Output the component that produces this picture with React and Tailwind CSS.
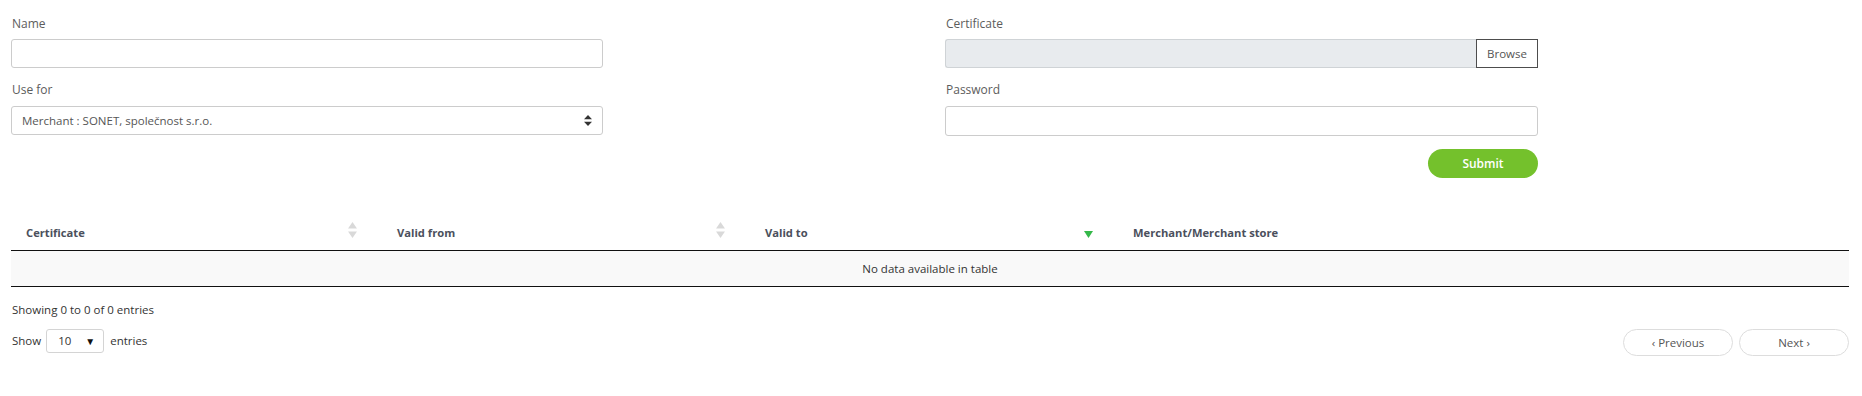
import React from "react";

function SortBoth() {
  return (
    <svg width="9" height="16" viewBox="0 0 9 16" className="block">
      <path d="M4.5 0 L9 6.5 L0 6.5 Z" fill="#d9d9d9" />
      <path d="M0 9.5 L9 9.5 L4.5 16 Z" fill="#d9d9d9" />
    </svg>
  );
}

function SortDesc() {
  return (
    <svg width="9" height="7" viewBox="0 0 9 7" className="block">
      <path d="M0 0 L9 0 L4.5 7 Z" fill="#35b84a" />
    </svg>
  );
}

function HeaderCell({ label, icon, width }) {
  return (
    <div className={`relative flex items-center pl-[15px] pt-[2px] ${width}`}>
      <span className="font-bold text-[#4b505c] text-[11.2px]">{label}</span>
      {icon === "both" && (
        <span className="absolute right-[25px] top-[8px]">
          <SortBoth />
        </span>
      )}
      {icon === "desc" && (
        <span className="absolute right-[25px] top-[17px]">
          <SortDesc />
        </span>
      )}
    </div>
  );
}

export default function App() {
  return (
    <div className="w-[1862px] h-[396px] bg-white font-['Open_Sans',sans-serif] text-[12px] text-[#333] overflow-hidden">
      <div className="pl-[11px] pr-[13px] pt-[16px]">
        <div className="grid grid-cols-[592px_593px] gap-x-[342px]">
          <div className="flex flex-col">
            <label className="h-[16px] leading-[16px] text-[#5c5c5c] pl-[1px]">Name</label>
            <input className="mt-[7px] h-[29px] border border-[#cccccc] rounded-[3px] bg-white outline-none px-[10px]" />
            <label className="mt-[14px] h-[16px] leading-[16px] text-[#5c5c5c] pl-[1px]">Use for</label>
            <div className="mt-[8px] h-[29px] border border-[#cccccc] rounded-[3px] bg-white flex items-center justify-between pl-[10px] pr-[10px]">
              <span className="text-[#555] text-[11.5px]">Merchant : SONET, společnost s.r.o.</span>
              <svg width="8" height="11" viewBox="0 0 8 11" className="block">
                <path d="M4 0 L8 4.3 L0 4.3 Z" fill="#333" />
                <path d="M0 6.7 L8 6.7 L4 11 Z" fill="#333" />
              </svg>
            </div>
          </div>
          <div className="flex flex-col">
            <label className="h-[16px] leading-[16px] text-[#5c5c5c] pl-[1px]">Certificate</label>
            <div className="mt-[7px] h-[29px] flex">
              <div className="flex-1 bg-[#e8ebee] border border-[#cfd3d6] border-r-0 rounded-l-[3px]" />
              <div className="w-[62px] border border-[#4d4d4d] bg-white flex items-center justify-center text-[#555] text-[11.5px]">
                Browse
              </div>
            </div>
            <label className="mt-[14px] h-[16px] leading-[16px] text-[#5c5c5c] pl-[1px]">Password</label>
            <input
              type="password"
              className="mt-[8px] h-[30px] border border-[#cccccc] rounded-[3px] bg-white outline-none px-[10px]"
            />
            <div className="mt-[13px] flex justify-end">
              <button className="w-[110px] h-[29px] rounded-full bg-[#74c12c] text-white font-semibold text-[12px]">
                Submit
              </button>
            </div>
          </div>
        </div>

        <div className="mt-[36px] w-[1838px]">
          <div className="flex h-[37px] border-b border-[#111]">
            <HeaderCell label="Certificate" icon="both" width="w-[371px]" />
            <HeaderCell label="Valid from" icon="both" width="w-[368px]" />
            <HeaderCell label="Valid to" icon="desc" width="w-[368px]" />
            <HeaderCell label="Merchant/Merchant store" width="flex-1" />
          </div>
          <div className="h-[36px] bg-[#f9f9f9] border-b border-[#111] flex items-center justify-center text-[#333] text-[11.5px]">
            No data available in table
          </div>
        </div>

        <div className="mt-[15px] h-[16px] leading-[16px] text-[#333] text-[11.5px] pl-[1px]">
          Showing 0 to 0 of 0 entries
        </div>
        <div className="mt-[11px] w-[1838px] flex justify-between items-start">
          <div className="flex items-center h-[24px] text-[11.5px] text-[#333] pl-[1px]">
            <span>Show</span>
            <div className="ml-[5px] w-[58px] h-[24px] border border-[#d4d4d4] rounded-[3px] flex items-center justify-between pl-[11px] pr-[8px]">
              <span>10</span>
              <span className="text-[10px] text-[#111]">▼</span>
            </div>
            <span className="ml-[6px]">entries</span>
          </div>
          <div className="flex gap-[6px]">
            <button className="w-[110px] h-[27px] rounded-full border border-[#dddddd] bg-white text-[#555] text-[11.5px] flex items-center justify-center">
              ‹ Previous
            </button>
            <button className="w-[110px] h-[27px] rounded-full border border-[#dddddd] bg-white text-[#555] text-[11.5px] flex items-center justify-center">
              Next ›
            </button>
          </div>
        </div>
      </div>
    </div>
  );
}
